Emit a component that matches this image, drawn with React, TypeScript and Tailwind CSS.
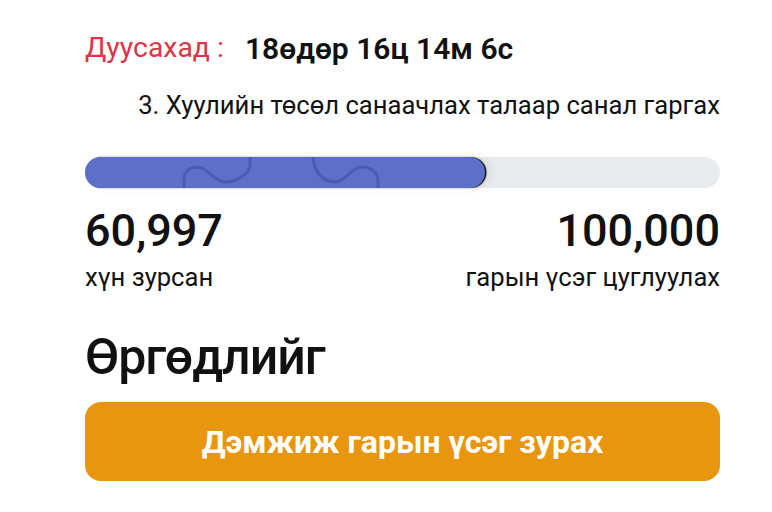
const Waves = () => (
  <svg
    className="absolute left-0 top-0 h-full w-[400px]"
    viewBox="0 0 400 31"
    fill="none"
    stroke="#4b5bb5"
    strokeWidth="3"
    strokeLinecap="round"
  >
    <path d="M99 33 V22 C99 12 108 9 116 11 C124 13 130 25 140 25 C152 25 165 16 165 8 V-2" />
    <path d="M228 -2 C228 14 238 25 250 25 C260 25 266 11 276 10 C286 9 293 16 293 24 V33" />
  </svg>
);

export default function App() {
  return (
    <div className="min-h-screen bg-white font-['Roboto',sans-serif] text-[#111]">
      <div className="ml-[85px] w-[635px] pt-[30px]">
        <div className="flex h-[36px] items-center gap-[21px]">
          <span className="text-[28.4px] text-[#dc3545]">Дуусахад :</span>
          <span className="text-[30px] font-semibold">18өдөр 16ц 14м 6с</span>
        </div>
        <p className="mt-[23px] text-right text-[25.6px] leading-[32px]">
          3. Хуулийн төсөл санаачлах талаар санал гаргах
        </p>
        <div className="mt-[36px] h-[31px] w-full rounded-full bg-[#e9ecef]">
          <div className="relative h-full w-[400px] overflow-hidden rounded-full bg-[#5e6fc9] shadow-[1.5px_0_1px_rgba(0,0,0,0.95),6px_0_10px_rgba(0,0,0,0.07)]">
            <Waves />
          </div>
        </div>
        <div className="mt-[17px] flex items-start justify-between">
          <div>
            <div className="text-[45px] font-medium leading-[52px]">60,997</div>
            <div className="mt-[4px] text-[25.6px] leading-[32px]">хүн зурсан</div>
          </div>
          <div className="text-right">
            <div className="text-[45px] font-medium leading-[52px]">100,000</div>
            <div className="mt-[4px] text-[25.6px] leading-[32px]">гарын үсэг цуглуулах</div>
          </div>
        </div>
        <h1 className="mt-[36px] text-[50px] font-medium leading-[56px] tracking-[-0.02em]">Өргөдлийг</h1>
        <button className="mt-[17px] flex h-[79px] w-full items-center justify-center rounded-[16px] bg-[#e8960f] text-[32px] font-bold text-white">
          Дэмжиж гарын үсэг зурах
        </button>
      </div>
    </div>
  );
}
